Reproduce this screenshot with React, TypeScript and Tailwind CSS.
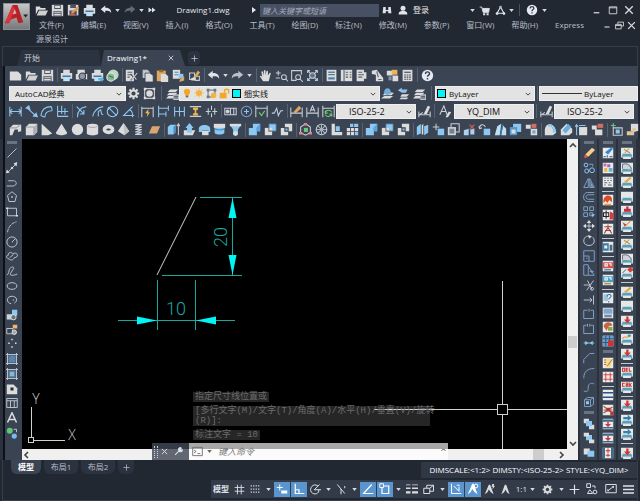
import React from "react";
import type { ReactNode } from "react";

const WHITE = "#dcdcdc";
const BLUE = "#8cc8f2";
const STEEL = "#7f9fc4";

const p = (d: string, stroke?: string) => <path d={d} stroke={stroke} />;
const f = (d: string, fill: string = WHITE) => <path d={d} fill={fill} stroke="none" />;
const tile = (children: ReactNode) => (
  <g strokeWidth="1.4">
    <rect x="1" y="1" width="14" height="14" fill="#e9ebea" stroke="none" />
    {children}
  </g>
);
const fixture = (children: ReactNode) => (
  <g strokeWidth="1.4">
    {f("M0 1h16v13h-3v2H3v-2H0z", "#e6e8e6")}
    {f("M1 9h14v4H1z", "#5d9fba")}
    {f("M3 13h10v3H3zM0 7h2v4H0zM14 7h2v4h-2z", "#e6e8e6")}
    {children}
  </g>
);
const prn = (
  <>
    {f("M4 1h8v4H4zM1 5h14v7H1z")}
    {f("M3 8h10v2H3z", "#3f78a8")}
    {f("M4 10h8v5H4z", "#bfe0f5")}
  </>
);
const dimBar = p("M1 3v12M15 3v12M1 10h14");
const tail = f("M1 9l6-2v8H1zM9 8l5-1v7H9z", "#a9d3f0");

const ICONS: Record<string, ReactNode> = {
  blank: f("M1 3h10l4 4v7H1z"),
  open: (
    <>
      {f("M1 3h5l1 2h6v2H4L1 13z")}
      {f("M5 8h11l-3 6H2z", "#cfcfcf")}
    </>
  ),
  save: (
    <>
      {f("M1 1h14v14H1z", "#d6d6d6")}
      {f("M4 1h8v5H4zM3 9h10v6H3z", "#4c5360")}
      {f("M5 2h6v3H5zM4 10h8v1H4zM4 12h8v2H4z")}
    </>
  ),
  saveas: (
    <>
      {f("M1 1h13v13H1z", "#d6d6d6")}
      {f("M4 1h7v4H4zM3 8h9v6H3z", "#4c5360")}
      {f("M5 13l1-4 7-6 2 2-7 6z", "#e39a4b")}
      {f("M4 12h6v2H4z", "#d05a4f")}
    </>
  ),
  print: prn,
  preview: (
    <>
      {f("M3 1h9v5H3zM1 6h14v7H1z")}
      <circle cx="9" cy="9" r="4" stroke="#343c48" fill="#8f98a5" />
      {p("M12 12l3 3", "#343c48")}
    </>
  ),
  publish: (
    <>
      {prn}
      {f("M9 11h4V9l3 4-3 3v-2H9z", "#5cb6ea")}
    </>
  ),
  globe: (
    <>
      <circle cx="9" cy="7" r="6.5" fill="#bfd6c4" stroke="none" />
      <circle cx="6" cy="10" r="5" fill="#86b896" stroke="#dfeee2" />
      {p("M3 9c3-2 4 3 6 1", "#426d50")}
    </>
  ),
  cut: (
    <>
      {f("M1 1h10v14H1z")}
      {p("M3 4h6M3 7h6M3 10h3", "#555f6d")}
      {p("M7 6l7 8M14 6l-7 8", "#2c333e")}
      {p("M8 5l6 8M15 5l-7 8")}
    </>
  ),
  copy: (
    <>
      {f("M2 1h6l3 3v7H2z", "#bfc4cb")}
      <path d="M5 5h6l4 3v8H5z" fill={WHITE} stroke="#3b4453" strokeWidth="1" />
    </>
  ),
  paste: (
    <>
      {f("M1 2h11v13H1z", "#dfa75e")}
      {f("M4 1h5v3H4z", "#8d6b42")}
      {f("M6 6h6l3 3v7H6z")}
    </>
  ),
  match: (
    <>
      {f("M1 1h9v11H1z")}
      {p("M3 4h5M3 7h5", "#4f8cc0")}
      {f("M8 6h6v5H8z", BLUE)}
      {f("M9 16l1-4 5-3v5z", "#dfa75e")}
    </>
  ),
  brush: (
    <>
      {p("M2 5h6v8H2zM9 9h5v5H9z")}
      {f("M6 11l6-9 3 2-6 8z", "#dfa75e")}
      {f("M4 11l5-1v4H4z")}
    </>
  ),
  undo: <path d="M1 7l6-5v3c5 0 8 2 8 7-2-3-4-3-8-3v3z" fill="#dfe3ea" stroke="none" />,
  redo: <path d="M15 7L9 2v3C4 5 1 7 1 12c2-3 4-3 8-3v3z" fill="#b9c0ca" stroke="none" />,
  redoDim: <path d="M15 7L9 2v3C4 5 1 7 1 12c2-3 4-3 8-3v3z" fill="#626a78" stroke="none" />,
  hand: (
    <path
      d="M5 15L1 9c0-1 2-1 3 1L3 4c0-2 2-1 2 0l1 4V2c0-1 2-1 2 0v6l1-5c0-1 2-1 2 0v5l2-3c1-1 2 0 1 2l-2 8z"
      fill={WHITE}
      stroke="none"
    />
  ),
  zoomRt: (
    <>
      {p("M1 5h6M4 2v6M1 11h5")}
      <circle cx="11" cy="10" r="3" />
      {p("M13 12l3 3")}
    </>
  ),
  zoomWin: (
    <>
      {p("M14 7V2H2v12h6")}
      <circle cx="10" cy="10" r="3" fill="#3b4453" />
      {p("M12 12l4 4")}
    </>
  ),
  zoomPrev: (
    <>
      {p("M2 2l12 12M14 2L2 14M2 5V2h3M11 2h3v3M2 11v3h3M11 14h3v-3", "#c3c9d2")}
      <circle cx="8" cy="8" r="3.5" fill="#59728e" />
    </>
  ),
  props: (
    <>
      {f("M2 1h12v14H2z")}
      {f("M4 3h8v2H4zM4 10h8v3H4z", "#4a86ae")}
      {p("M4 7h8", "#555f6d")}
    </>
  ),
  design: (
    <>
      {f("M1 1h14v14H1z")}
      {p("M5 1v14M7 4h3M7 7h3M7 10h3M12 4h2M12 7h2M12 10h2", "#555f6d")}
    </>
  ),
  palette: (
    <>
      {f("M2 1h9v3h3v8h-3v3H2z")}
      {p("M4 4h5M4 7h7M4 10h5", "#555f6d")}
    </>
  ),
  sheet: (
    <>
      {f("M1 2l6-1 8 10v4H6V7L1 6z")}
      {p("M7 3l2 7M9 13h4", "#555f6d")}
    </>
  ),
  markup: (
    <>
      {f("M1 2h7v6H1zM8 8h7v7H8z")}
      {f("M7 1h7v6H7z", "#efb457")}
      {f("M3 9h4v5H3z", "#7c91a8")}
    </>
  ),
  calc: (
    <>
      {f("M2 1h12v14H2z")}
      {p("M4 4h8", "#3b4453")}
      {p("M4 7.5h2M7 7.5h2M10 7.5h2M4 10h2M7 10h2M10 10h2M4 12.5h2M7 12.5h2M10 12.5h2", "#3b4453")}
    </>
  ),
  help: (
    <>
      <circle cx="8" cy="8" r="7" fill="#e6eaf0" stroke="none" />
      <path d="M5.5 6c0-3.5 5-3 5-.3C10.5 7.5 8 7.5 8 9.5M8 11v1.8" stroke="#2c3a55" strokeWidth="1.7" />
    </>
  ),
  gear: (
    <>
      <path d="M8 1v14M1 8h14M3 3l10 10M13 3L3 13" stroke={WHITE} strokeWidth="2.6" />
      <circle cx="8" cy="8" r="3.8" fill="#3b4453" stroke={WHITE} strokeWidth="2.4" />
    </>
  ),
  chip: (
    <>
      {p("M2 2h12v12H2z")}
      {f("M1 1h3v3H1zM12 1h3v3h-3zM1 12h3v3H1zM12 12h3v3h-3z")}
      <circle cx="8" cy="8" r="4" fill={WHITE} stroke="none" />
    </>
  ),
  layers: (
    <>
      {f("M5 3h10l-3 3H2zM4 7h10l-3 3H1zM3 11h6v3H0z")}
      {f("M9 9h7v7H9z", "#c5cad1")}
      {p("M10 11.5h5M10 13.5h5", "#3b4453")}
    </>
  ),
  layerCur: (
    <>
      {f("M2 10h11l3-3H5zM0 14h11l4-3H4z")}
      <path d="M4 6c0-6 8-6 8 0l2 1-6 3-5-3z" fill="#71aedb" stroke="none" />
    </>
  ),
  layerPrev: (
    <>
      {f("M6 9h9l-3 3H4zM5 13h9l-2 2H3z")}
      {f("M1 4l5-3v2h7l-2 4H6V7z", "#8dc1e7")}
    </>
  ),
  bulb: (
    <>
      <circle cx="8" cy="6" r="5" fill="#f5a623" stroke="none" />
      {f("M5 9h6v3H5z", "#f5a623")}
      {f("M6 12h4v3H6z", "#5c6571")}
    </>
  ),
  sun: (
    <>
      <circle cx="8" cy="8" r="4.5" fill="#f5a623" stroke="none" />
      {p("M8 0v16M0 8h16M2 2l12 12M14 2L2 14", "#f5b850")}
    </>
  ),
  vpfreeze: (
    <>
      {p("M3 3h10v10H3z", "#555f6d")}
      {f("M1 1h4v4H1zM11 1h4v4h-4zM1 11h4v4H1z", "#6d7680")}
      <circle cx="11" cy="11" r="4" fill="#f5b43b" stroke="none" />
    </>
  ),
  unlock: (
    <>
      {f("M1 7h10v8H1z", "#f5a623")}
      <path d="M8 7V4c0-3 6-3 6 0v4" stroke="#f5a623" strokeWidth="2" />
    </>
  ),
  dimLinear: p("M1 2v12M15 2v12M1 8h14M4 5L1 8l3 3M12 5l3 3-3 3", BLUE),
  dimAligned: (
    <>
      {p("M3 4l10 9", BLUE)}
      {f("M0 4l5-4 2 6zM9 14l5-5 2 6z", BLUE)}
    </>
  ),
  dimArc: p("M1 13C2 6 6 2 14 2M6 15c0-5 3-8 9-8M1 13l5 2M14 2l1 5", BLUE),
  dimOrd: p("M2 1v13h13M7 1v10M2 8h13M11 4v8", BLUE),
  dimRadius: p("M3 15C3 7 6 3 14 2M2 2l9 9M11 6v5H6", BLUE),
  dimJog: p("M2 14C4 6 8 3 15 2M9 14V8l3-2 1 5 2 1", BLUE),
  dimDia: (
    <>
      <circle cx="8" cy="8" r="6.5" stroke={BLUE} />
      {p("M3 3l10 10M6 3H3v3", BLUE)}
    </>
  ),
  dimAng: p("M13 2L2 13h13M9 6c4 1 4 4 4 9", BLUE),
  dimQuick: (
    <>
      {p("M1 2v13M15 2v13M1 4h14")}
      {f("M9 5l-4 5h3l-1 5 4-6H9z", "#f0b64c")}
    </>
  ),
  dimBase: p("M2 1v14M2 4h12M14 1v6M2 11h9M11 8v6", BLUE),
  dimCont: p("M2 2v12M8 2v12M14 2v12M2 8h12", BLUE),
  dimSpace: (
    <>
      {p("M1 2h14M1 14h14")}
      {f("M5 3h6v3H9v4h2v3H5v-3h2V6H5z", "#f0b64c")}
    </>
  ),
  dimBreak: p("M1 8h6M9 8h6M8 1v5M8 10v5M12 4v8M4 4v8"),
  tolerance: (
    <>
      {p("M1 4h14v8H1zM8 4v8M12 4v8")}
      <circle cx="4.5" cy="8" r="1.8" fill={WHITE} />
    </>
  ),
  center: (
    <>
      <circle cx="8" cy="8" r="6.5" stroke={STEEL} />
      {p("M8 5v6M5 8h6", BLUE)}
    </>
  ),
  inspect: (
    <>
      {p("M1 1v14M15 1v14M1 4h14")}
      {p("M5 9l3 4 4-6", "#6ed36f")}
    </>
  ),
  jogged: p("M1 10h3l3-6 2 9 3-6h3", "#c4d0de"),
  dimEdit: (
    <>
      {dimBar}
      {f("M4 9l7-8 3 3-7 6z", "#dfa75e")}
    </>
  ),
  dimText: (
    <>
      {dimBar}
      {p("M5 8l3-7 3 7M6 6h4")}
    </>
  ),
  dimUpdate: (
    <>
      {p("M1 1v14M15 1v14M1 4h14")}
      {p("M4 9c2-4 7-3 8 0M12 11c-2 4-6 4-8 1M4 7v3h3M12 14v-3H9", "#6ed36f")}
    </>
  ),
  dimStyle: (
    <>
      {p("M1 8v7M15 8v7M1 12h14M2 12l4-3")}
      {f("M7 11l5-10 3 1-4 9z")}
    </>
  ),
  textStyle: (
    <>
      {p("M1 12L6 1l4 11M3 8h6")}
      {f("M8 15l4-7 3 1-4 6z")}
    </>
  ),
  polysolid: (
    <>
      {f("M1 6l4-4h10v8l-4 1V8H7l-3 7H1z")}
      {p("M1 6h8l5-4", "#9a9fa6")}
    </>
  ),
  box: (
    <>
      {f("M1 5l4-4h10v10l-4 4H1z")}
      {f("M11 5l4-4v10l-4 4z", "#aeb2b8")}
      {p("M1 5h10v10", "#9a9fa6")}
    </>
  ),
  wedge: f("M2 1l13 12-5 2H2z"),
  cone: f("M8 1l7 11c0 4-14 4-14 0z"),
  sphere: <circle cx="8" cy="8" r="7" fill={WHITE} stroke="none" />,
  cylinder: (
    <>
      {f("M1 4c0-4 14-4 14 0v9c0 3-14 3-14 0z")}
      {p("M2 4c2 2 10 2 12 0", "#a1a5ab")}
    </>
  ),
  torus: <ellipse cx="8" cy="8" rx="5" ry="3.5" stroke={WHITE} strokeWidth="4.500" />,
  pyramid: (
    <>
      {f("M8 0l7 10-6 5-8-5z")}
      {f("M8 0l7 10-6 5z", "#bfc2c6")}
    </>
  ),
  helix: p("M4 2h8L4 5h8L4 8h8l-8 3h8l-8 3h8", "#cfd3d8"),
  plane: f("M5 4h10l-4 9H1z", "#d9a672"),
  extrude: (
    <>
      {f("M1 5l3-3h7v9l-3 3H1z", BLUE)}
      {f("M8 5l3-3v9l-3 3z", "#4c8cbf")}
      {p("M14 15V2M12 4l2-3 2 3")}
    </>
  ),
  presspull: (
    <>
      {f("M1 9h14l-3 6H1z")}
      {f("M5 5h6v7H5zM8 0l5 6H3z", BLUE)}
    </>
  ),
  sweep: (
    <>
      {f("M1 7c0-6 14-6 14 0v4H1z", BLUE)}
      {f("M5 8h8v7H5z")}
      {p("M5 9h8", "#4c8cbf")}
    </>
  ),
  revolve: (
    <>
      {f("M2 4h12v8c0 3-12 3-12 0z", BLUE)}
      {f("M1 1h14v5H1z")}
      {p("M2 7c3 2 9 2 12 0", "#4c8cbf")}
    </>
  ),
  loft: (
    <>
      {f("M1 2h14l-4 6v6H5V8z", BLUE)}
      {f("M1 1h14v3H1z")}
      <circle cx="8" cy="13" r="3" fill={WHITE} stroke="none" />
    </>
  ),
  union: (
    <>
      {f("M6 1h9v9h-4v5H1V6h5z", BLUE)}
      {f("M11 5l4-4v9h-4v5l-1-9z", "#5da4dc")}
    </>
  ),
  subtract: (
    <>
      <path d="M6 1h9v9H6z" fill={BLUE} stroke="#49627c" strokeWidth="1" />
      {f("M1 6h9v9H1z")}
      {p("M6 6v4h4", "#68717d")}
    </>
  ),
  intersect: (
    <>
      {f("M6 1h9v9H6zM1 6h9v9H1z")}
      <path d="M6 6h4v4H6z" fill={BLUE} stroke="#333b47" />
    </>
  ),
  orbit3d: (
    <>
      {p("M8 1l6 4v7l-6 3-6-3V5z")}
      {f("M6 6h5v5H6z", "#68c886")}
      {f("M6 0h4v3H6zM0 11h4v3H0zM12 11h4v3h-4z", "#e3877e")}
    </>
  ),
  mesh: (
    <>
      <circle cx="8" cy="8" r="6.5" />
      {p("M8 1v14M1 8h14M3 3l10 10M13 3L3 13", "#aab4bf")}
    </>
  ),
  alignL: (
    <>
      {f("M2 1h4v10h9v4H2z")}
      {f("M7 4h5v6H7z", BLUE)}
    </>
  ),
  array3d: (
    <>
      {f("M1 6h4v4H1zM6 6h4v4H6zM11 6h4v4h-4zM1 11h4v4H1zM6 11h4v4H6z")}
      {f("M5 1h4v4H5zM10 1h5v4h-5zM11 11h4v4h-4z", BLUE)}
    </>
  ),
  slice: (
    <>
      {f("M1 5l5-4v12l-5 2zM10 4l5-2v10l-5 3z", BLUE)}
      {f("M7 3l2-2v13H7z")}
    </>
  ),
  plusBox: (
    <>
      {p("M5 1v8M1 5h8")}
      {f("M7 7h8v8H7z", BLUE)}
    </>
  ),
  copyBox: (
    <>
      {p("M5 5V1h10v10h-4")}
      {f("M1 5h10v10H1z", "#cdd3da")}
      {f("M3 7h6v6H3z", "#77818d")}
    </>
  ),
  delFace: (
    <>
      {tail}
      {p("M8 2l6 6M14 2L8 8", "#e26060")}
    </>
  ),
  rotFace: (
    <>
      {f("M7 7h8v8H7z", BLUE)}
      {p("M2 6c0-5 6-5 7-1M1 4l1 3 3-1")}
    </>
  ),
  taper: (
    <>
      {f("M1 15L4 4l5-3-2 14zM9 15l2-12 4 4v8z", "#bcdff4")}
      {p("M8 15l3-13", "#4383b0")}
    </>
  ),
  copyFace: (
    <>
      {f("M5 1h10v10H5z", BLUE)}
      {f("M1 5h9v10H1z", "#4f9bd0")}
      {f("M3 8h5v5H3z")}
    </>
  ),
  color: (
    <>
      {f("M1 2h6v5H1zM7 7h8v8H7z")}
      {f("M8 1h6v5H8z", "#d56d65")}
      {f("M9 9h4v4H9z", "#76a9cd")}
    </>
  ),
  fillet3d: (
    <>
      {f("M1 8c1-9 13-9 14 4l-4 3H1z")}
      {f("M5 2c5-1 9 3 10 9l-4 1C11 6 9 4 5 5z", BLUE)}
    </>
  ),
  chamfer3d: (
    <>
      {f("M1 8l7-7 7 6v5l-4 3H1z")}
      {f("M3 9l7-8 4 4-7 8z", "#69aee0")}
    </>
  ),
  edge: (
    <>
      {f("M5 5h10v10H5z")}
      {p("M2 3v12M0 5l2-3 2 3M5 3h8", "#8cc8f2")}
    </>
  ),
  edgeColor: (
    <>
      {f("M5 8h9v7H5zM1 3h6v5H1z")}
      {f("M8 1h7v5H8z", "#d56d65")}
    </>
  ),
  imprint: (
    <>
      {p("M4 0v6M1 3h6", "#68c886")}
      {p("M4 6h11v9H4z")}
      {f("M7 8h5v5H7z", BLUE)}
    </>
  ),
  clean: (
    <>
      {f("M6 1h9v9H6z")}
      {f("M1 10h9v5H1zM8 6h4v5H8z", "#dcc79a")}
    </>
  ),

  line: p("M2 14L14 2"),
  xline: (
    <>
      {p("M2 14L14 2")}
      {f("M0 15l1-5 4 4zM15 0l-1 6-4-4zM6 8l2-2 2 2-2 2z")}
    </>
  ),
  pline: p("M1 12h8c6 0 6-7 1-7H3"),
  polygon: (
    <>
      {p("M8 1l6 5-2 8H4L2 6z")}
      {f("M7 7h2v2H7z")}
    </>
  ),
  rect: (
    <>
      {p("M2 3h12v10H2z")}
      {f("M0 2h3v2H0zM13 12h3v2h-3z")}
    </>
  ),
  arc: <path d="M2 15C3 8 7 3 14 1" strokeDasharray="5 1" />,
  circle: (
    <>
      <circle cx="8" cy="8" r="6.8" />
      {p("M8 8h1M8 8l5-5")}
    </>
  ),
  cloud: p("M4 12C0 11 0 7 3 7c0-5 5-4 6-2 4-2 7 0 6 3-1 2-2 2-4 2-1 4-5 4-7 2zM5 10l5-4"),
  spline: p("M1 13c2 0 2-2 3-5C5 1 12 2 10 5L6 11c-2 4 5 3 9 1"),
  ellipse: <ellipse cx="8" cy="8" rx="6.5" ry="4.5" />,
  earc: p("M9 8h2M7 13C0 12 0 3 8 3c7 0 8 7 3 9"),
  insert: (
    <>
      {f("M1 7h8v7H1z", "#cdd4dc")}
      {f("M8 1h7v8H8z", BLUE)}
      <circle cx="10" cy="11" r="3.5" fill="#68727f" stroke={WHITE} />
    </>
  ),
  block: (
    <>
      {p("M1 6h8v7H1z")}
      <circle cx="11" cy="11" r="3" fill="#9fa6ae" stroke={WHITE} />
      {f("M9 1h6v5H9z", "#f0b670")}
    </>
  ),
  points: f("M7 1h2v2H7zM3 6h2v2H3zM12 6h2v2h-2zM7 11h2v2H7z"),
  hatch: (
    <>
      {f("M3 3h10v10H3z", "#55799c")}
      {p("M2 0v16M14 0v16M0 2h16M0 14h16")}
      {p("M4 9l5-5M5 12l7-7M9 12l3-3", "#6f9cc2")}
    </>
  ),
  gradient: (
    <>
      {f("M3 3h10v10H3z", "#527798")}
      {f("M5 5h6v6H5z", "#91b4cd")}
      {p("M2 0v16M14 0v16M0 2h16M0 14h16")}
    </>
  ),
  region: (
    <>
      {f("M1 2h9l5 5v8H1z")}
      {f("M6 6h4v4H6z", "#222933")}
    </>
  ),
  table: p("M1 2h14v12H1zM1 5h14M6 5v9M11 5v9"),
  mtext: <path d="M2 14L8 1l6 13M4.5 10h7" stroke={WHITE} strokeWidth="2" />,
  addsel: (
    <>
      <circle cx="5" cy="5" r="4" fill="#62c779" stroke="none" />
      <circle cx="11" cy="12" r="3.5" fill="#78b9eb" stroke="none" />
      {p("M10 3h4v4")}
    </>
  ),

  erase: (
    <>
      {f("M3 10L12 1l4 3-9 9z", "#f2cf8a")}
      {f("M3 10l4 3-4 2-2-2z", "#d95a4a")}
    </>
  ),
  mcopy: (
    <>
      <circle cx="4" cy="4" r="2.5" stroke={BLUE} />
      <circle cx="5" cy="12" r="2.7" stroke={BLUE} />
      <circle cx="12" cy="11" r="3.2" stroke={BLUE} />
      {p("M8 3h5v3", STEEL)}
    </>
  ),
  mirror: (
    <>
      {p("M7 2v12H1zM9 2v12h6z", STEEL)}
      {f("M10 6v7h4z", STEEL)}
    </>
  ),
  offset: p("M15 2H6C-1 2-1 14 6 14h9M15 5H7c-4 0-4 6 0 6h8", STEEL),
  array: (
    <>
      {p("M1 1h5v5H1zM9 1h5v5H9zM1 9h5v5H1zM9 9h4v4H9z", STEEL)}
      {f("M11 11h5l-3 4z", BLUE)}
    </>
  ),
  move: (
    <>
      {p("M8 2v12M2 8h12")}
      {f("M8 0l3 4H5zM8 16l3-4H5zM0 8l4-3v6zM16 8l-4-3v6z")}
    </>
  ),
  rotate: (
    <>
      {p("M10 2C4 0 1 4 1 8c0 8 14 8 14 0 0-2-1-4-2-5")}
      {f("M7 0l5 2-4 3z")}
    </>
  ),
  scale: p("M1 1h14v14H1zM1 8h7v7M4 11h2", STEEL),
  stretch: p("M1 1h6v14H1zM7 3l8 12H7M9 10h5M11 8l2 2-2 2", STEEL),
  trim: (
    <>
      {p("M1 8h8M5 15L14 2M6 2l6 12")}
      <circle cx="12" cy="13" r="2" />
    </>
  ),
  extend: p("M1 8h11M9 5l3 3-3 3M14 2v12"),
  breakPt: p("M6 3H1v11h13V3h-4M8 1v4", STEEL),
  breakO: p("M5 3H1v11h13V3h-4M6 1v4M9 1v4", STEEL),
  join: (
    <>
      {p("M1 8h14", BLUE)}
      {f("M3 5l4 3-4 3zM13 5L9 8l4 3z", BLUE)}
    </>
  ),
  chamfer: p("M1 15v-5l8-8h6", STEEL),
  fillet: p("M1 15C1 6 6 2 15 2", STEEL),
  blend: p("M1 13c5 3 6 0 6-5s5-6 8-4", STEEL),
  explode: (
    <>
      {p("M2 5l4-3h8v9l-4 3H2zM2 5h8v9M10 5l4-3", STEEL)}
      {f("M4 7h4v4H4z", BLUE)}
    </>
  ),
  orderA: (
    <>
      {f("M1 1h7v6H1zM8 9h7v6H8z")}
      {f("M4 4h8v7H4z", BLUE)}
    </>
  ),
  orderB: (
    <>
      {f("M4 4h8v7H4z", BLUE)}
      {f("M1 1h7v5H1zM8 10h7v5H8z")}
    </>
  ),
  orderC: (
    <>
      {f("M1 2h8v8H1z")}
      {f("M6 5h9v8H6z", BLUE)}
    </>
  ),

  tSvg: tile(
    <>
      {f("M4 7l8-6 3 1-7 8z", "#2f87d4")}
      {p("M2 13h3M7 11v3M10 13h4", "#2a4f80")}
    </>
  ),
  tColors: tile(
    <>
      {f("M2 2h4v4H2z", "#d66b9a")}
      {f("M7 3h4v4H7z", "#9a66c8")}
      {f("M3 8h4v5H3z", "#e9b442")}
      {f("M9 8h5v5H9z", "#63b3c6")}
    </>
  ),
  tDots: tile(p("M3 3h2M7 3h2M11 3h2M3 6h2M7 6h2M11 6h2M3 9h4M9 9h2M3 12h2M8 12h5", "#626a74")),
  tFlame: tile(
    <>
      {f("M2 12C1 5 5 2 8 2c5 0 6 4 5 9l-3-3-3 4-2-3z", "#de4a24")}
      {f("M3 13h9v2H3z", "#f09a3e")}
    </>
  ),
  tZhong: tile(
    <>
      {p("M2 5h7v5H2zM5.5 2v11", "#222")}
      {f("M11 3l4 3v8h-5z", "#d83b3b")}
    </>
  ),
  tBig: tile(p("M3 5h10M8 2v4l-5 8M8 6l5 8M4 10h8", "#a34436")),
  tPanel: tile(
    <>
      {f("M1 3h8v10H1z", "#3b7da9")}
      {f("M3 6h4v4H3z", "#f1f1ee")}
      {p("M11 5v8M13 5v8", "#1f4767")}
    </>
  ),
  tRed: tile(
    <>
      {f("M1 3h14v8H1z", "#d75252")}
      {p("M4 5h3v3H4zM9 5h3v3", "#fff")}
      {f("M3 12h9v2H3z", "#4793b1")}
    </>
  ),
  tTeal: tile(
    <>
      {f("M1 3h14v8H1z", "#4a9fbc")}
      {p("M4 5h3v3H4zM9 5h3v3", "#fff")}
      {f("M3 12h9v2H3z", "#c99145")}
    </>
  ),
  tAsk: tile(
    <>
      {f("M2 3h6v9H2z", "#a0c4de")}
      {p("M7 6c0-4 6-3 5 0-1 2-3 2-3 4M9 12v2", "#3474b2")}
    </>
  ),
  tKeys: tile(
    <>
      {f("M2 2h12v7H2z", "#82a9cc")}
      {p("M3 11h10M3 13h10", "#4c6a88")}
    </>
  ),
  tPaint: tile(
    <>
      {f("M2 7c2-7 10-7 12-1l-5 1-3 6z", "#c96343")}
      {f("M8 8h6v5H8z", "#88a846")}
    </>
  ),
  tGrid: tile(
    <>
      {f("M1 1h14v14H1z", "#6f9fc6")}
      {p("M1 5h14M1 10h14M5 1v14M10 1v14", "#2a5a86")}
      {f("M8 7h7v8H8z", "#cf3232")}
    </>
  ),
  tNote: tile(
    <>
      {f("M4 2h8v12H4z", "#f2dc8e")}
      {p("M3 4h2M3 7h2M3 10h2", "#c03b3b")}
      {p("M7 12l7-9", "#c67a31")}
    </>
  ),
  tPlus: tile(p("M5 2v12M11 2v12M2 5h12M2 11h12", "#d84b4b")),
  tLines: tile(f("M1 4h14v2H1zM1 10h14v2H1z", "#2d4f86")),
  tNode: tile(
    <>
      {p("M2 3l12 9M2 12l12-8M2 8h12", "#93543e")}
      {f("M6 5h5v5H6zM11 10h4v5h-4z", "#b9342c")}
    </>
  ),
  tArrowV: tile(
    <>
      {f("M1 2h14v3H1zM1 12h14v2H1z", "#3a6c8d")}
      {f("M7 5h2v3h3l-4 4-4-4h3z", "#d73333")}
    </>
  ),
  tArrowH: tile(
    <>
      {f("M1 1h3v14H1zM12 1h3v14h-3z", "#3a6c8d")}
      {p("M5 5h6M8 2v6M5 11h6M8 9v4", "#d73333")}
    </>
  ),
  dPen: fixture(p("M4 3l8 5M11 2L5 8", "#b9984f")),
  dArc: fixture(
    <>
      {f("M2 9V3c7-2 11 2 12 7z", "#ced4d8")}
      {p("M2 9V3c7-2 11 2 12 7", "#6f7b86")}
    </>
  ),
  dPencil: fixture(f("M4 8l8-7 2 2-7 6z", "#e4a53e")),
  dPlain: fixture(null),
  dStar: fixture(f("M7 2h3v3h3v4H4V5h3z", "#cb2b3c")),
  dRedPen: fixture(
    <>
      {p("M6 8l7-7", "#dc8b31")}
      {f("M2 3l5 3-2 3z", "#cf3a32")}
    </>
  ),
  dPlusR: fixture(
    <>
      {f("M9 2h2V0h3v2h2v3h-2v2h-3V5H9z", "#d53737")}
      {p("M2 8l5-5", "#6f7b86")}
    </>
  ),
  dDown: fixture(f("M7 2h3v4h3l-4.5 5L4 6h3z", "#d53333")),
  dWave: fixture(
    <>
      {p("M2 8c3-7 5 2 11-5", "#e39a3c")}
      {f("M9 2h4v3H9z", "#4c93ad")}
    </>
  ),
  dDel: fixture(p("M2 3h3v4H2zM9 3H7v4h2M7 5h2M11 2v5h3", "#cf3333")),
  dChk: fixture(p("M5 3H2v4h3M7 2v6M9 2v6M7 5h2M11 2v6M14 3l-2 2 2 3", "#cf3333")),
  dArrowR: fixture(f("M3 4h6V1l5 4.5L9 9V7H3z", "#2e82b4")),

  bino: f("M2 3h4v5h4V3h4l1 10h-5v-3H6v3H1z", "#dfe3ea"),
  user: (
    <>
      <circle cx="8" cy="5" r="4" fill="#dfe3ea" stroke="none" />
      {f("M1 15c0-5 3-5 5-6h4c2 1 5 1 5 6z", "#dfe3ea")}
    </>
  ),
  cart: (
    <>
      {p("M1 3h3l2 8h8l1-6H5")}
      {f("M5 5h10l-1 5H6zM6 12h3v3H6zM11 12h3v3h-3z", "#dfe3ea")}
    </>
  ),
  triA: (
    <>
      <path d="M8 3l5 9H3z" strokeWidth="1.6" />
      <circle cx="8" cy="3" r="2" fill="#9fb6d8" stroke="none" />
      <circle cx="3" cy="12.5" r="2" fill="#dfe3ea" stroke="none" />
      <circle cx="13" cy="12.5" r="2" fill="#dfe3ea" stroke="none" />
    </>
  ),
  ff: f("M1 3l7 5-7 5zM8 3l7 5-7 5z", "#dfe3ea"),
  min: <path d="M3 12h10" stroke={WHITE} strokeWidth="2.2" />,
  max: <path d="M2 3h12v11H2zM2 4.5h12" stroke={WHITE} strokeWidth="1.4" />,
  close: <path d="M2 2l12 12M14 2L2 14" stroke={WHITE} strokeWidth="2.2" />,
  restore: <path d="M5 6V2h10v7h-4M1 6h10v8H1zM1 8h10" stroke={WHITE} strokeWidth="1.5" />,

  grid: p("M5 1v14M10.5 1v14M1 5h14M1 10.5h14"),
  snap: f("M1 2h2v2H1zM5 2h2v2H5zM9 2h2v2H9zM13 2h2v2h-2zM1 7h2v2H1zM5 7h2v2H5zM9 7h2v2H9zM13 7h2v2h-2zM1 12h2v2H1zM5 12h2v2H5zM9 12h2v2H9zM13 12h2v2h-2z"),
  dyn: (
    <>
      {p("M5 2v8M1 6h8")}
      {f("M7 10h8v4H7z", "#fff")}
    </>
  ),
  ortho: <path d="M3 1v13h12M3 9h5v5" stroke="#fff" strokeWidth="1.6" />,
  polar: p("M12 4C5-1 0 8 3 12c4 5 11 2 10-3M7 9h9M7 9l7-7"),
  iso: p("M3 2l10 12M8 8v7M13 4v3"),
  otrack: <path d="M1 14h14M2 14L13 2" stroke="#fff" strokeWidth="1.6" />,
  osnap: (
    <>
      <path d="M4 4h9v10H4z" stroke="#fff" strokeWidth="1.6" />
      <path d="M1 1h5v5H1z" fill="#5b95cf" stroke="#fff" strokeWidth="1.2" />
    </>
  ),
  lweight: f("M0 2h6v1H0zM8 2h8v1H8zM0 6h6v2H0zM8 6h8v2H8zM0 11h6v3H0zM8 11h8v3H8z"),
  cycle: p("M1 7h8v7H1zM5 7V3h9v8H9M9 7l5-4"),
  ducs: <path d="M2 1v13h13M5 4l7 7M12 5v6M9 3h4" stroke="#fff" />,
  annoA: (
    <>
      {f("M7 1l2 0 5 14-4-3-3-4-2 4-4 3z", "#fff")}
      <circle cx="12" cy="4" r="2.5" stroke="#fff" />
    </>
  ),
  annoB: (
    <>
      {f("M7 1l2 0 5 14-4-3-3-4-2 4-4 3z")}
      {f("M12 0l3 0-1 3h2l-4 5 1-4h-2z")}
    </>
  ),
  annoC: f("M7 1h2l5 14-4-3-2-4-2 4-4 3z"),
  plus: <path d="M8 1v14M1 8h14" strokeWidth="1.7" />,
  isolate: (
    <>
      {p("M1 1h5v5H1zM8 4h4v3M5 9l4 5H2z")}
      <circle cx="12" cy="12" r="2.5" />
    </>
  ),
  clean2: (
    <>
      {p("M1 2h14v11H1z")}
      {f("M3 8v3h3zM12 4H9l3 3z")}
      {p("M4 10l7-5")}
    </>
  ),
  menu: <path d="M0 3h16M0 8h16M0 13h16" strokeWidth="2.2" />,
  wrench: (
    <path
      d="M2 14l7-7M9 7C6 2 11 0 13 2l-2 2 2 2 2-1c0 4-4 4-6 2z"
      fill="#dfe3ea"
      stroke="#dfe3ea"
      strokeWidth="1.8"
    />
  ),
  prompt: p("M1 2h14v12H1zM3 6l3 2-3 2M8 11h4", "#6d6d6d"),
};

function Icon({ name, className = "size-[13px]" }: { name: string; className?: string }) {
  return (
    <svg
      viewBox="0 0 16 16"
      aria-hidden="true"
      className={`shrink-0 ${className}`}
      fill="none"
      stroke="currentColor"
      strokeWidth="1.3"
    >
      {ICONS[name]}
    </svg>
  );
}

function Caret({ className = "w-[11px]" }: { className?: string }) {
  return (
    <button type="button" aria-label="展开" className={`flex shrink-0 items-center justify-center ${className}`}>
      <svg viewBox="0 0 6 4" className="h-[3px] w-[5px]" aria-hidden="true">
        <path d="M0 0h6L3 4z" fill="#d5dae2" />
      </svg>
    </button>
  );
}

function IconButton({ name, box = "w-4", icon = "size-[13px]" }: { name: string; box?: string; icon?: string }) {
  return (
    <button type="button" aria-label={name} className={`flex shrink-0 items-center justify-center ${box}`}>
      <Icon name={name} className={icon} />
    </button>
  );
}

function Group({ names, width, caret = false }: { names: string; width: string; caret?: boolean }) {
  return (
    <div className={`flex shrink-0 items-center justify-around ${width}`}>
      {names.split(" ").map((name) => (
        <React.Fragment key={name}>
          <IconButton name={name} box="w-3.5" />
          {caret && <Caret className="w-[10px]" />}
        </React.Fragment>
      ))}
    </div>
  );
}

function Sep({ wide = false }: { wide?: boolean }) {
  return (
    <div className={`flex shrink-0 justify-center ${wide ? "w-2" : "w-1"}`}>
      <div className="h-3.5 w-px bg-[#596272]" />
    </div>
  );
}

function Combo({
  label,
  value,
  className,
  textClass,
  children,
}: {
  label: string;
  value: string;
  className: string;
  textClass: string;
  children?: ReactNode;
}) {
  return (
    <div className={`relative h-[15px] ${className}`}>
      <select
        aria-label={label}
        className={`block h-full w-full appearance-none border border-[#efefef] bg-[#e3e3e3] leading-[13px] text-[#111] outline-none ${textClass}`}
      >
        <option>{value}</option>
      </select>
      {children}
    </div>
  );
}

function ComboArrow() {
  return (
    <svg viewBox="0 0 8 5" className="pointer-events-none absolute top-1.5 right-1 h-[4px] w-[6px]" aria-hidden="true">
      <path d="M1 1l3 3 3-3" fill="none" stroke="#444" strokeWidth="1.3" />
    </svg>
  );
}

function Grip() {
  return (
    <div className="flex h-[7px] w-full shrink-0 items-center justify-center">
      <div className="h-[3px] w-2.5 bg-[#6a7381]" />
    </div>
  );
}

/* A vertical tool strip: "|" draws a divider and "=" draws a grip. */
function Strip({ names, className }: { names: string; className: string }) {
  return (
    <div className={`flex shrink-0 flex-col items-center bg-[#3a4352] ${className}`}>
      {names.split(" ").map((name, i) =>
        name === "=" ? (
          <Grip key={i} />
        ) : name === "|" ? (
          <div key={i} className="flex h-1 w-full shrink-0 items-center justify-center">
            <div className="h-px w-3 bg-[#c5cad2]" />
          </div>
        ) : (
          <button key={i} type="button" aria-label={name} className="flex min-h-0 flex-1 items-center justify-center">
            <Icon name={name} className="size-3" />
          </button>
        )
      )}
    </div>
  );
}

const MENUS = ["文件(F)", "编辑(E)", "视图(V)", "插入(I)", "格式(O)", "工具(T)", "绘图(D)", "标注(N)", "修改(M)", "参数(P)", "窗口(W)", "帮助(H)", "Express"];

function Header() {
  return (
    <header className="flex h-[46px] shrink-0 pt-[3px] pl-[3px]">
      <button
        type="button"
        aria-label="应用程序菜单"
        className="flex size-[27px] shrink-0 items-center border border-[#8a8d92] bg-linear-to-b from-[#c6c6c6] to-[#77797c]"
      >
        <svg viewBox="0 0 26 26" className="size-full" aria-hidden="true">
          <path d="M1 20L9 1h5l6 18-5 1-2-6-6 2-2 4z" fill="#b81f27" />
          <path d="M9 11l2-6 2 5z" fill="#cdb4b4" />
          <path d="M1 20L9 1l2 4-5 14z" fill="#dd3339" />
          <path d="M20 11h5l-2.5 3z" fill="#222" />
        </svg>
      </button>
      <div className="flex min-w-0 flex-1 flex-col">
        <div className="flex h-[14px] items-center text-[#e4e7ec]">
          <div className="flex pl-[3px]">
            <IconButton name="open" />
            <IconButton name="save" />
            <IconButton name="saveas" />
            <IconButton name="print" />
            <IconButton name="undo" box="w-[17px]" icon="size-3" />
            <Caret className="w-[7px]" />
            <IconButton name="redoDim" box="w-[17px]" icon="size-3" />
            <Caret className="w-[7px]" />
            <IconButton name="ff" box="w-[14px]" icon="size-2" />
          </div>
          <h1 className="w-[88px] text-center text-[8px]">Drawing1.dwg</h1>
          <div className="flex w-[13px] justify-center">
            <svg viewBox="0 0 4 6" className="h-[6px] w-[4px]" aria-hidden="true">
              <path d="M0 0l4 3-4 3z" fill="#e4e7ec" />
            </svg>
          </div>
          <input
            type="text"
            aria-label="搜索"
            placeholder="键入关键字或短语"
            className="h-[13px] w-[119px] bg-[#485063] pl-0.5 text-[8px] italic outline-none placeholder:text-[#a3aab8]"
          />
          <IconButton name="bino" icon="size-2.5" />
          <IconButton name="user" icon="size-2.5" />
          <button type="button" className="w-[57px] pl-0.5 text-left text-[8px]">
            登录
          </button>
          <Caret className="w-2" />
          <IconButton name="cart" icon="size-[11px]" />
          <IconButton name="triA" icon="size-[11px]" />
          <Caret className="w-[7px]" />
          <div className="mx-1 h-3 w-px bg-[#4a5260]" />
          <IconButton name="help" icon="size-3" />
          <Caret className="w-[9px]" />
          <div className="flex-1" />
          <IconButton name="min" icon="size-[9px]" />
          <IconButton name="max" box="w-[17px]" icon="size-[10px]" />
          <IconButton name="close" icon="size-[10px]" />
          <div className="w-[3px]" />
        </div>
        <div className="flex h-4 items-center pl-[9px]">
          <nav className="flex gap-[17px] text-[8px] text-[#b9bfc9]">
            {MENUS.map((m) => (
              <button key={m} type="button" className="shrink-0 whitespace-nowrap">
                {m}
              </button>
            ))}
          </nav>
          <div className="flex-1" />
          <IconButton name="min" box="w-3" icon="size-[8px]" />
          <IconButton name="restore" box="w-3" icon="size-[9px]" />
          <IconButton name="close" box="w-3" icon="size-[9px]" />
          <div className="w-[3px]" />
        </div>
        <div className="flex h-3 items-center pl-1.5 text-[8px] text-[#b9bfc9]">
          <button type="button">源泉设计</button>
        </div>
      </div>
    </header>
  );
}

function FileTabs() {
  return (
    <div className="mx-[2px] flex h-5 shrink-0 items-end border border-b-0 border-[#373e4b] pl-3.5 text-[8px]">
      <button
        type="button"
        className="h-4 w-[84px] bg-[#2c3340] pl-[7px] text-left text-[#c4cad3] [clip-path:polygon(0_100%,4px_0,82px_0,100%_100%)]"
      >
        开始
      </button>
      <div className="flex h-4 w-[84px] items-center bg-[#3b4453] pl-[6px] text-white [clip-path:polygon(0_100%,3px_0,79px_0,100%_100%)]">
        <button type="button" className="w-[59px] text-left">
          Drawing1*
        </button>
        <IconButton name="close" box="w-2.5" icon="size-[6px]" />
      </div>
      <button
        type="button"
        aria-label="新图形"
        className="mb-px ml-[3px] flex h-3.5 w-3 items-center justify-center rounded-sm bg-[#2c3340] text-[#c4cad3]"
      >
        <Icon name="plus" className="size-[7px]" />
      </button>
    </div>
  );
}

function Toolbars() {
  return (
    <div className="mr-[2px] ml-[3px] shrink-0 border-l-2 border-[#0d1016] bg-[#3b4453] pl-[3px] text-[#c8cdd6]">
      <div className="flex h-[18px] items-center">
        <Group width="w-[47px]" names="blank open save" />
        <Sep />
        <Group width="w-[61px]" names="print preview publish globe" />
        <Sep />
        <Group width="w-[78px]" names="cut copy paste match brush" />
        <Sep />
        <Group width="w-[48px]" names="undo redo" caret />
        <Sep />
        <Group width="w-[62px]" names="hand zoomRt zoomWin zoomPrev" />
        <Sep />
        <Group width="w-[91px]" names="props design palette sheet markup calc" />
        <Sep />
        <Group width="w-4" names="help" />
      </div>
      <div className="flex h-[18px] items-center text-[8px]">
        <Combo label="工作空间" value="AutoCAD经典" className="ml-px w-[117px]" textClass="pl-[5px]">
          <ComboArrow />
        </Combo>
        <Group width="w-[31px]" names="gear chip" />
        <Sep wide />
        <Group width="w-3.5" names="layers" />
        <Combo label="图层" value="细实线" className="w-[201px]" textClass="pl-[64px]">
          <ComboArrow />
          <div className="pointer-events-none absolute inset-y-0 left-[3px] flex items-center gap-[2px]">
            <Icon name="bulb" className="size-2.5" />
            <Icon name="sun" className="size-[10px]" />
            <Icon name="vpfreeze" className="size-[11px]" />
            <Icon name="unlock" className="size-[11px]" />
            <span className="size-[9px] border border-black bg-[#00f5f5]" />
          </div>
        </Combo>
        <Group width="w-[47px]" names="layerCur layerPrev layers" />
        <Sep wide />
        <Combo label="颜色" value="ByLayer" className="w-[100px]" textClass="pl-[13px]">
          <ComboArrow />
          <span className="pointer-events-none absolute top-[3px] left-[2px] size-[9px] border border-black bg-[#00f5f5]" />
        </Combo>
        <Sep />
        <Combo label="线型" value="ByLayer" className="min-w-0 flex-1" textClass="pl-[44px]">
          <span className="pointer-events-none absolute top-[7px] left-[3px] h-px w-10 bg-[#333]" />
        </Combo>
      </div>
      <div className="flex h-[18px] items-center text-[9px]">
        <Group width="w-[62px]" names="dimLinear dimAligned dimArc dimOrd" />
        <Sep />
        <Group width="w-[62px]" names="dimRadius dimJog dimDia dimAng" />
        <Sep />
        <Group width="w-[79px]" names="dimQuick dimBase dimCont dimSpace dimBreak" />
        <Sep />
        <Group width="w-[62px]" names="tolerance center inspect jogged" />
        <Sep />
        <Group width="w-[47px]" names="dimEdit dimText dimUpdate" />
        <Combo label="标注样式" value="ISO-25-2" className="w-20" textClass="pl-3">
          <ComboArrow />
        </Combo>
        <Group width="w-4" names="dimStyle" />
        <Sep />
        <Group width="w-[18px]" names="textStyle" />
        <Combo label="文字样式" value="YQ_DIM" className="w-20" textClass="pl-3">
          <ComboArrow />
        </Combo>
        <Sep />
        <Group width="w-4" names="dimStyle" />
        <Combo label="当前标注样式" value="ISO-25-2" className="w-20" textClass="pl-3">
          <ComboArrow />
        </Combo>
      </div>
      <div className="flex h-[19px] items-center">
        <Group width="w-[154px]" names="polysolid box wedge cone sphere cylinder torus pyramid helix plane" />
        <Sep />
        <Group width="w-[77px]" names="extrude presspull sweep revolve loft" />
        <Sep />
        <Group width="w-[47px]" names="union subtract intersect" />
        <Sep />
        <Group width="w-[62px]" names="orbit3d mesh alignL array3d" />
        <Sep />
        <Group width="w-[47px]" names="union subtract intersect" />
        <Sep />
        <Group width="w-[124px]" names="slice plusBox copyBox delFace rotFace taper copyFace color" />
        <Sep />
        <Group width="w-[62px]" names="fillet3d chamfer3d edge edgeColor" />
        <Sep />
        <Group width="w-[31px]" names="imprint clean" />
      </div>
    </div>
  );
}

function Drawing() {
  return (
    <svg className="absolute inset-0 size-full" role="img" aria-label="图形">
      <path d="M135 136L174 58" stroke="#cfcfcf" fill="none" />
      <g stroke="#1aa7a0" fill="none" shapeRendering="crispEdges">
        <path d="M178 58.5h42M140 136.5h80M210.5 59v77" />
        <path d="M135.5 141v50M173.5 141v50M96 181.5h117" />
      </g>
      <g fill="#00f5f5">
        <path d="M210.5 59l4 20h-8zM210.5 136l4-20h-8z" />
        <path d="M135 181.5l-20-4v8zM174 181.5l20-4v8z" />
      </g>
      <g fill="#1aa7a0" textAnchor="middle" className="font-[Roboto,sans-serif] text-[18px] font-light">
        <text x="154" y="176">
          10
        </text>
        <text transform="translate(205 98) rotate(-90)">20</text>
      </g>
      <g stroke="#cfcfcf" fill="none" shapeRendering="crispEdges">
        <path d="M6.5 298.5h5v5h-5zM9.5 298v-30M12 301.5h31" />
        <path d="M480.5 142v123M480.5 276v34M352 270.5h123M486 270.5h59" />
        <path d="M475.5 265.5h10v10h-10z" />
      </g>
      <g fill="#cfcfcf" textAnchor="middle" className="text-[14px] font-light">
        <text x="14" y="265">
          Y
        </text>
        <text x="50" y="301">
          X
        </text>
      </g>
    </svg>
  );
}

function Chevron({ d, className }: { d: string; className: string }) {
  return (
    <svg viewBox="0 0 8 8" className={className} fill="none" stroke="#444" strokeWidth="1.6" aria-hidden="true">
      <path d={d} />
    </svg>
  );
}

function CommandLine() {
  return (
    <div className="absolute bottom-0 left-[130px] w-[296px]">
      <div className="mb-[3px] flex flex-col items-start gap-1 pl-[41px] font-['Liberation_Mono','Noto_Sans_CJK_SC',monospace] text-[9px] leading-[10px] whitespace-nowrap text-[#6c6c6c]">
        <p className="bg-white/15 px-0.5">指定尺寸线位置或</p>
        <p className="w-[237px] bg-white/15 pl-0.5">
          [多行文字(M)/文字(T)/角度(A)/水平(H)/垂直(V)/旋转
          <br />
          (R)]:
        </p>
        <p className="bg-white/15 px-0.5">标注文字 = 10</p>
      </div>
      <div className="flex h-[17px] text-white">
        <div className="flex w-[37px] items-center bg-linear-to-b from-[#343b47] from-35% to-[#626873] to-35%">
          <div className="ml-0.5 h-3 w-[4px] border-x border-dotted border-[#d0d4da]" />
          <IconButton name="close" box="w-3" icon="size-[7px]" />
          <IconButton name="wrench" box="w-4" icon="size-[9px]" />
        </div>
        <div className="flex min-w-0 flex-1 items-center bg-linear-to-b from-[#a8a8a8] from-35% to-[#fbfbfb] to-35% pl-[3px]">
          <Icon name="prompt" className="size-[11px]" />
          <svg viewBox="0 0 6 4" className="mx-1 h-[3px] w-[5px]" aria-hidden="true">
            <path d="M0 0h6L3 4z" fill="#666" />
          </svg>
          <input
            type="text"
            aria-label="命令"
            placeholder="键入命令"
            className="min-w-0 flex-1 bg-transparent pl-0.5 text-[9px] text-black italic outline-none placeholder:text-[#777]"
          />
          <Chevron d="M1 6l3-3 3 3" className="mr-[2px] mb-1 size-[5px]" />
        </div>
      </div>
    </div>
  );
}

function Workspace() {
  return (
    <main className="flex min-h-[321px] flex-1 items-stretch bg-[#2b323e] pr-1 text-[#bcc3cd]">
      <div className="ml-[3px] w-[19px] shrink-0 border-l-2 border-[#0d1016] bg-[#3a4352]">
        <Strip
          className="h-[301px] w-[13px]"
          names="= line xline pline polygon rect arc circle cloud spline ellipse earc insert block points hatch gradient region table mtext addsel"
        />
      </div>
      <div className="relative flex min-w-0 flex-1 flex-col">
        <div className="flex min-h-0 flex-1">
          <div className="relative min-w-0 flex-1 overflow-hidden bg-black">
            <Drawing />
          </div>
          <div className="flex w-[11px] flex-col items-center bg-[#f0f0f0]">
            <Chevron d="M1 6l3-3 3 3" className="mt-0.5 size-2" />
            <div className="flex-[185]" />
            <div className="h-3 w-[9px] bg-[#cdcdcd]" />
            <div className="flex-[91]" />
            <Chevron d="M1 2l3 3 3-3" className="mb-px size-2" />
          </div>
        </div>
        <div className="flex h-[11px] shrink-0 items-center bg-[#f0f0f0]">
          <Chevron d="M5 1L2 4l3 3" className="ml-px size-2" />
          <div className="flex-1" />
          <div className="h-full w-[11px] bg-[#cdcdcd]" />
          <Chevron d="M3 1l3 3-3 3" className="mr-[13px] ml-[13px] size-2" />
        </div>
        <CommandLine />
      </div>
      <div className="flex h-[321px] gap-[2px] pl-[2px]">
        <Strip
          className="w-[17px]"
          names="= erase mcopy mirror offset array move rotate scale stretch trim extend breakPt breakO join chamfer fillet blend explode = orderA orderB orderC"
        />
        <Strip
          className="w-[17px]"
          names="= tSvg tColors tDots | tFlame tZhong tBig | tPanel | tRed tTeal | tAsk tKeys tPaint tGrid = tNote tPlus | tLines tNode tArrowV tArrowV tArrowH"
        />
        <Strip
          className="w-[18px]"
          names="= dPen dArc dPencil dPlain dStar dRedPen | dPen dArc dPlusR | dPencil dPlain dDown | dWave dDown | dDel dChk | dDown dArrowR dArrowR | dDown"
        />
      </div>
    </main>
  );
}

function ActiveToggle({ name }: { name: string }) {
  return (
    <button
      type="button"
      aria-label={name}
      aria-pressed="true"
      className="flex h-[15px] w-4 shrink-0 items-center justify-center bg-[#5b95cf] text-white"
    >
      <Icon name={name} className="size-3" />
    </button>
  );
}

function Footer() {
  return (
    <footer className="mx-[2px] shrink-0 border-x border-b border-[#373e4b]">
      <div className="flex h-[19px] items-start justify-between text-[8px]">
        <div className="flex h-[14px] gap-[3px] pl-2 text-[#b9bfc9]">
          <button type="button" className="w-[30px] rounded-b-md bg-[#3b4453] font-bold text-white">
            模型
          </button>
          <button type="button" className="w-[34px] rounded-b-md bg-[#2c3340]">
            布局1
          </button>
          <button type="button" className="w-[34px] rounded-b-md bg-[#2c3340]">
            布局2
          </button>
          <button
            type="button"
            aria-label="新建布局"
            className="flex w-4 items-center justify-center rounded-b-md bg-[#2c3340]"
          >
            <Icon name="plus" className="size-[7px]" />
          </button>
        </div>
        <output className="mt-[2px] flex h-4 w-[216px] items-center justify-center bg-[#303846] whitespace-nowrap text-white">
          DIMSCALE:&lt;1:2&gt; DIMSTY:&lt;ISO-25-2&gt; STYLE:&lt;YQ_DIM&gt;
        </output>
      </div>
      <div className="flex h-[21px] items-start justify-end pt-px text-[8px] text-[#dfe3e9]">
        <div className="flex h-[18px] items-center bg-[#333b48] pr-px">
          <button type="button" className="w-5 font-bold">
            模型
          </button>
          <IconButton name="grid" icon="size-[11px]" />
          <IconButton name="snap" icon="size-[10px]" />
          <Caret />
          <div className="flex gap-px">
            <ActiveToggle name="dyn" />
            <ActiveToggle name="ortho" />
          </div>
          <IconButton name="polar" icon="size-3" />
          <Caret className="w-[10px]" />
          <IconButton name="iso" icon="size-3" />
          <Caret />
          <div className="flex gap-px">
            <ActiveToggle name="otrack" />
            <ActiveToggle name="osnap" />
          </div>
          <Caret className="w-[10px]" />
          <IconButton name="lweight" box="w-[18px]" icon="size-3" />
          <IconButton name="cycle" icon="size-3" />
          <Caret />
          <div className="flex gap-px">
            <ActiveToggle name="ducs" />
            <ActiveToggle name="annoA" />
          </div>
          <IconButton name="annoB" icon="size-[11px]" />
          <IconButton name="annoC" icon="size-[11px]" />
          <button type="button" className="w-3.5 text-right">
            1:1
          </button>
          <Caret />
          <IconButton name="gear" box="w-[18px]" icon="size-[11px]" />
          <Caret className="w-[10px]" />
          <IconButton name="plus" icon="size-[11px]" />
          <IconButton name="isolate" box="w-5" icon="size-3" />
          <IconButton name="clean2" box="w-[18px]" icon="size-3" />
          <IconButton name="menu" box="w-4" icon="size-[11px]" />
        </div>
      </div>
    </footer>
  );
}

export default function App() {
  return (
    <div className="flex min-h-screen flex-col bg-[#212832] font-['Open_Sans','Noto_Sans_CJK_SC',sans-serif] text-[8px] leading-none">
      <Header />
      <FileTabs />
      <Toolbars />
      <Workspace />
      <Footer />
    </div>
  );
}
